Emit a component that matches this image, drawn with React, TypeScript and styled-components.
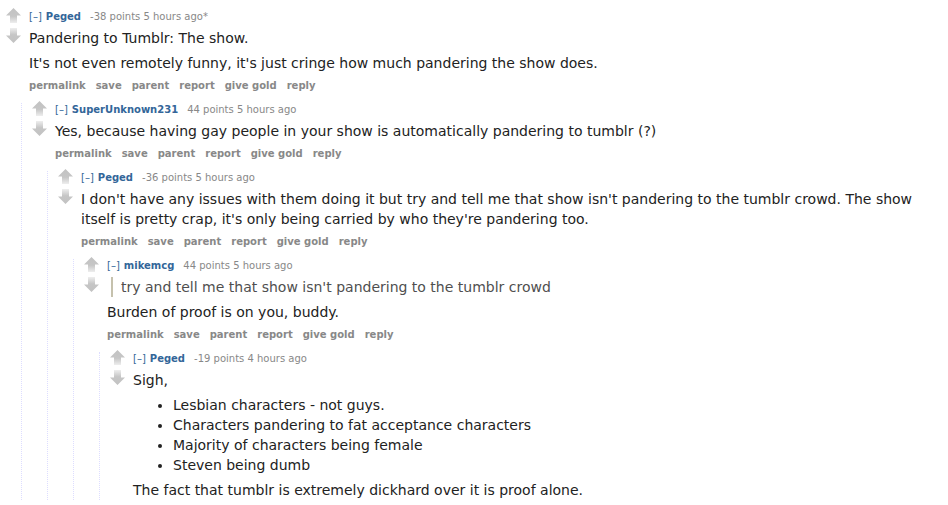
import styled, { createGlobalStyle } from "styled-components";
import { ReactNode } from "react";

type CommentData = {
  author: string;
  score: string;
  time: string;
  edited?: boolean;
  noButtons?: boolean;
  body: ReactNode;
  replies?: CommentData[];
};

const GlobalStyle = createGlobalStyle`
  body {
    margin: 0;
    background: #fff;
    font-family: "DejaVu Sans", Verdana, sans-serif;
  }
`;

const thread: CommentData = {
  author: "Peged",
  score: "-38 points",
  time: "5 hours ago",
  edited: true,
  body: (
    <>
      <p>Pandering to Tumblr: The show.</p>
      <p>It's not even remotely funny, it's just cringe how much pandering the show does.</p>
    </>
  ),
  replies: [
    {
      author: "SuperUnknown231",
      score: "44 points",
      time: "5 hours ago",
      body: <p>Yes, because having gay people in your show is automatically pandering to tumblr (?)</p>,
      replies: [
        {
          author: "Peged",
          score: "-36 points",
          time: "5 hours ago",
          body: (
            <p>
              I don't have any issues with them doing it but try and tell me that show isn't
              pandering to the tumblr crowd. The show itself is pretty crap, it's only being carried
              by who they're pandering too.
            </p>
          ),
          replies: [
            {
              author: "mikemcg",
              score: "44 points",
              time: "5 hours ago",
              body: (
                <>
                  <blockquote>
                    <p>try and tell me that show isn't pandering to the tumblr crowd</p>
                  </blockquote>
                  <p>Burden of proof is on you, buddy.</p>
                </>
              ),
              replies: [
                {
                  author: "Peged",
                  score: "-19 points",
                  time: "4 hours ago",
                  noButtons: true,
                  body: (
                    <>
                      <p>Sigh,</p>
                      <ul>
                        <li>Lesbian characters - not guys.</li>
                        <li>Characters pandering to fat acceptance characters</li>
                        <li>Majority of characters being female</li>
                        <li>Steven being dumb</li>
                      </ul>
                      <p>The fact that tumblr is extremely dickhard over it is proof alone.</p>
                    </>
                  ),
                },
              ],
            },
          ],
        },
      ],
    },
  ],
};

const buttons = ["permalink", "save", "parent", "report", "give gold", "reply"];

const UpArrow = () => (
  <svg width="15" height="15" viewBox="0 0 15 15">
    <defs>
      <linearGradient id="upg" x1="0" y1="0" x2="0" y2="1">
        <stop offset="0" stopColor="#c2c2c2" />
        <stop offset="0.55" stopColor="#c6c6c6" />
        <stop offset="1" stopColor="#eeeeee" />
      </linearGradient>
    </defs>
    <path d="M7.5 0 L15 7.5 L11 7.5 L11 15 L4 15 L4 7.5 L0 7.5 Z" fill="url(#upg)" />
  </svg>
);

const DownArrow = () => (
  <svg width="15" height="15" viewBox="0 0 15 15">
    <defs>
      <linearGradient id="dng" x1="0" y1="0" x2="0" y2="1">
        <stop offset="0" stopColor="#eeeeee" />
        <stop offset="0.45" stopColor="#c6c6c6" />
        <stop offset="1" stopColor="#c2c2c2" />
      </linearGradient>
    </defs>
    <path d="M4 0 L11 0 L11 7.5 L15 7.5 L7.5 15 L0 7.5 L4 7.5 Z" fill="url(#dng)" />
  </svg>
);

const Comment = ({ data }: { data: CommentData }) => (
  <CommentBox>
    <Row>
      <MidCol>
        <UpArrow />
        <DownArrow />
      </MidCol>
      <Entry>
        <Tagline>
          <Expand>[–]</Expand>
          <Author>{data.author}</Author>
          <Score>
            {data.score} {data.time}
            {data.edited ? "*" : ""}
          </Score>
        </Tagline>
        <Md>{data.body}</Md>
        {!data.noButtons && (
          <Buttons>
            {buttons.map((b) => (
              <li key={b}>{b}</li>
            ))}
          </Buttons>
        )}
      </Entry>
    </Row>
    {data.replies && (
      <Child>
        {data.replies.map((r, i) => (
          <Comment key={i} data={r} />
        ))}
      </Child>
    )}
  </CommentBox>
);

export default function App() {
  return (
    <>
      <GlobalStyle />
      <Thread>
        <Comment data={thread} />
      </Thread>
    </>
  );
}

const Thread = styled.div`
  padding: 10px 8px 0 6px;
  overflow: hidden;
  height: 505px;
  box-sizing: border-box;
`;

const CommentBox = styled.div``;

const Row = styled.div`
  display: flex;
  align-items: flex-start;
`;

const MidCol = styled.div`
  width: 15px;
  margin: -2px 8px 0 0;
  display: flex;
  flex-direction: column;
  gap: 5px;
  svg {
    display: block;
  }
`;

const Entry = styled.div`
  flex: 1;
  min-width: 0;
`;

const Tagline = styled.div`
  font-size: 10px;
  line-height: 14px;
  color: #888;
  white-space: nowrap;
`;

const Expand = styled.span`
  color: #369;
  margin-right: 4px;
`;

const Author = styled.span`
  color: #369;
  font-weight: bold;
  margin-right: 9px;
`;

const Score = styled.span`
  color: #888;
`;

const Md = styled.div`
  margin-top: 4px;
  font-size: 14px;
  line-height: 20px;
  color: #222;

  p {
    margin: 0 0 5px 0;
  }
  p:last-child {
    margin-bottom: 0;
  }
  blockquote {
    margin: 0 0 5px 4px;
    padding: 0 8px;
    border-left: 2px solid #c5c1ad;
    color: #4f4f4f;
  }
  ul {
    margin: 0 0 5px 0;
    padding-left: 40px;
  }
`;

const Buttons = styled.ul`
  list-style: none;
  margin: 6px 0 0 0;
  padding: 0;
  display: flex;
  gap: 10px;
  font-size: 10px;
  line-height: 14px;
  font-weight: bold;
  color: #888;
`;

const Child = styled.div`
  margin: 10px 0 0 15px;
  padding-left: 10px;
  border-left: 1px dotted #ddf;
`;
